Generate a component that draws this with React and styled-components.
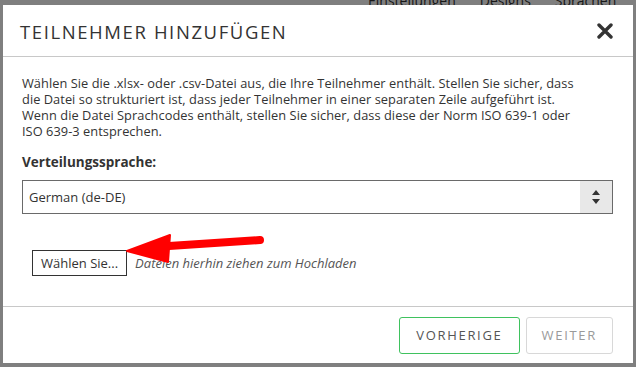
import React from "react"
import styled, { createGlobalStyle } from "styled-components"

const GlobalStyle = createGlobalStyle`
  body {
    margin: 0;
    font-family: "Open Sans", "Lato", sans-serif;
  }
`

const Page = styled.div`
  position: relative;
  width: 636px;
  height: 367px;
  overflow: hidden;
  background: #fff;
`

const TopNav = styled.div`
  display: flex;
  gap: 24px;
  padding-left: 368px;
  margin-top: -9px;
  font-size: 14px;
  color: #333;
  white-space: nowrap;
`

const Overlay = styled.div`
  position: absolute;
  inset: 0;
  background: rgba(0, 0, 0, 0.5);
  padding: 5px 3px 4px 3px;
  box-sizing: border-box;
  display: flex;
`

const Modal = styled.div`
  flex: 1;
  background: #fff;
  display: flex;
  flex-direction: column;
  color: #333;
`

const Header = styled.div`
  height: 51px;
  border-bottom: 1px solid #c8c8c8;
  display: flex;
  align-items: center;
  justify-content: space-between;
  padding: 0 20px 0 17px;
`

const Title = styled.h2`
  margin: 2px 0 0;
  font-size: 18.5px;
  font-weight: 400;
  letter-spacing: 1.6px;
  color: #333;
`

const CloseButton = styled.button`
  border: 0;
  background: none;
  padding: 0;
  width: 16px;
  height: 16px;
  display: flex;
  cursor: pointer;
`

const Body = styled.div`
  flex: 1;
  padding: 18px 20px 0 19px;
`

const Intro = styled.p`
  margin: 0;
  font-size: 12.8px;
  letter-spacing: 0.05px;
  line-height: 16px;
  color: #333;
  white-space: nowrap;
`

const Label = styled.div`
  margin-top: 14px;
  font-size: 13.5px;
  font-weight: 700;
  color: #333;
`

const SelectBox = styled.div`
  margin-top: 9px;
  height: 32px;
  border: 1px solid #6a6a6a;
  display: flex;
  align-items: stretch;
`

const SelectValue = styled.div`
  flex: 1;
  display: flex;
  align-items: center;
  padding-left: 6px;
  font-size: 13px;
  color: #333;
`

const Stepper = styled.div`
  width: 32px;
  background: #e8e8e8;
  display: flex;
  align-items: center;
  justify-content: center;
`

const UploadRow = styled.div`
  position: relative;
  margin-top: 36px;
  margin-left: 10px;
  display: flex;
  align-items: center;
  gap: 8px;
`

const FileButton = styled.button`
  height: 26px;
  padding: 0 8px;
  border: 1px solid #333;
  background: #fff;
  font-family: inherit;
  font-size: 13px;
  color: #333;
`

const DropHint = styled.span`
  font-style: italic;
  font-size: 13px;
  color: #555;
`

const Pointer = styled.svg`
  position: absolute;
  left: 92px;
  top: -19px;
`

const Footer = styled.div`
  height: 56px;
  border-top: 1px solid #c8c8c8;
  display: flex;
  justify-content: flex-end;
  align-items: center;
  gap: 6px;
  padding-right: 20px;
`

const FooterButton = styled.button`
  height: 37px;
  padding: 0 ${({ $primary }) => ($primary ? "16px" : "15px")};
  border-radius: 3px;
  border: 1px solid ${({ $primary }) => ($primary ? "#3fc25e" : "#d8d8d8")};
  background: #fff;
  font-family: inherit;
  font-size: 13px;
  letter-spacing: 1.7px;
  color: ${({ $primary }) => ($primary ? "#555" : "#9a9a9a")};
`

export default function App() {
  return (
    <Page>
      <GlobalStyle />
      <TopNav>
        <span>Einstellungen</span>
        <span>Designs</span>
        <span>Sprachen</span>
        <span>Verteilen</span>
      </TopNav>
      <Overlay>
        <Modal>
          <Header>
            <Title>TEILNEHMER HINZUFÜGEN</Title>
            <CloseButton aria-label="Schließen">
              <svg width="16" height="16" viewBox="0 0 16 16">
                <path d="M2 2 L14 14 M14 2 L2 14" stroke="#333" strokeWidth="3.4" strokeLinecap="round" />
              </svg>
            </CloseButton>
          </Header>
          <Body>
            <Intro>
              Wählen Sie die .xlsx- oder .csv-Datei aus, die Ihre Teilnehmer enthält. Stellen Sie sicher, dass
              <br />
              die Datei so strukturiert ist, dass jeder Teilnehmer in einer separaten Zeile aufgeführt ist.
              <br />
              Wenn die Datei Sprachcodes enthält, stellen Sie sicher, dass diese der Norm ISO 639-1 oder
              <br />
              ISO 639-3 entsprechen.
            </Intro>
            <Label>Verteilungssprache:</Label>
            <SelectBox>
              <SelectValue>German (de-DE)</SelectValue>
              <Stepper>
                <svg width="8" height="14" viewBox="0 0 8 14">
                  <path d="M4 0 L8 5 L0 5 Z M4 14 L8 9 L0 9 Z" fill="#333" />
                </svg>
              </Stepper>
            </SelectBox>
            <UploadRow>
              <FileButton>Wählen Sie...</FileButton>
              <DropHint>Dateien hierhin ziehen zum Hochladen</DropHint>
              <Pointer width="145" height="40" viewBox="0 0 145 40">
                <path d="M45 15 L136 9" stroke="#f00" strokeWidth="8" strokeLinecap="round" />
                <path d="M3 20 L46 4 L44 31 Z" fill="#f00" stroke="#f00" strokeWidth="2" strokeLinejoin="round" />
              </Pointer>
            </UploadRow>
          </Body>
          <Footer>
            <FooterButton $primary>VORHERIGE</FooterButton>
            <FooterButton>WEITER</FooterButton>
          </Footer>
        </Modal>
      </Overlay>
    </Page>
  )
}
